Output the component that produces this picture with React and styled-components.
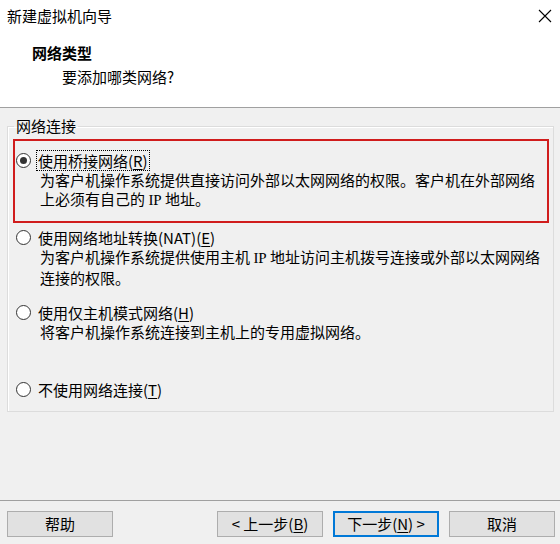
import React from "react";
import styled, { createGlobalStyle } from "styled-components";

const GlobalStyle = createGlobalStyle`
  html, body {
    margin: 0;
    padding: 0;
    background: #f0f0f0;
  }
  body {
    font-family: "Noto Sans CJK SC", "Noto Sans", sans-serif;
    font-size: 15px;
    color: #000;
  }
`;

const Window = styled.div`
  width: 560px;
  height: 544px;
  display: flex;
  flex-direction: column;
  overflow: hidden;
  background: #f0f0f0;
`;

const Header = styled.header`
  height: 108px;
  box-sizing: border-box;
  background: #fff;
  border-bottom: 1px solid #a0a0a0;
`;

const TitleBar = styled.div`
  height: 32px;
  display: flex;
  align-items: center;
  justify-content: space-between;
  padding: 0 8px 0 7px;
  line-height: 20px;
`;

const CloseButton = styled.span`
  display: block;
  width: 14px;
  height: 14px;
  flex: none;

  svg {
    display: block;
  }
`;

const Heading = styled.div`
  margin-top: 11px;
  padding-left: 32px;
  line-height: 20px;
`;

const HeadingTitle = styled.div`
  font-weight: bold;
`;

const HeadingSub = styled.div`
  margin-top: 4px;
  padding-left: 30px;
`;

const Body = styled.main`
  flex: 1;
`;

const Group = styled.fieldset`
  margin: 8px 6px 0 7px;
  padding: 3px 4px 12px 5px;
  border: 1px solid #dcdcdc;
  box-shadow: inset 1px 1px 0 #fff;
  min-width: 0;
`;

const Legend = styled.legend`
  padding: 0 2px;
  margin-left: 1px;
  line-height: 20px;
`;

const Highlight = styled.div`
  border: 2px solid #d01c1c;
  padding: 9.5px 0 11px 1px;
`;

const Option = styled.div`
  padding-left: ${(p) => (p.$framed ? 0 : 3)}px;
  margin-top: ${(p) => p.$top || 0}px;
  line-height: 19px;
`;

const OptionLabel = styled.div`
  display: flex;
  align-items: center;
  gap: 7px;
  height: 19px;
`;

const Radio = styled.span`
  position: relative;
  width: 15px;
  height: 15px;
  box-sizing: border-box;
  border: 1px solid #333;
  border-radius: 50%;
  background: #fff;
  flex: none;

  &::after {
    content: "";
    display: ${(p) => (p.$checked ? "block" : "none")};
    position: absolute;
    left: 3px;
    top: 3px;
    width: 7px;
    height: 7px;
    border-radius: 50%;
    background: #333;
  }
`;

const Focus = styled.span`
  outline: 1px dotted #000;
  padding: 0 1px;
  margin-left: -1px;
`;

const Key = styled.span`
  text-decoration: underline;
  text-underline-offset: 2px;
`;

const Latin = styled.span`
  font-family: "Liberation Serif", serif;
`;

const Desc = styled.div`
  padding-left: 24px;
`;

const Footer = styled.footer`
  height: 44px;
  box-sizing: border-box;
  border-top: 1px solid #a0a0a0;
  padding: 10px 5px 0 7px;
  display: flex;
  gap: 10px;
`;

const Button = styled.button`
  width: 106px;
  height: 26px;
  box-sizing: border-box;
  border: ${(p) => (p.$primary ? "2px solid #0078d7" : "1px solid #adadad")};
  background: #e1e1e1;
  font: inherit;
  line-height: 20px;
  color: #000;
  padding: 0;
  margin-left: ${(p) => (p.$push ? "auto" : "0")};
`;

const CloseIcon = () => (
  <svg width="14" height="14" viewBox="0 0 14 14">
    <path d="M1 1 L13 13 M13 1 L1 13" stroke="#000" strokeWidth="1.1" fill="none" />
  </svg>
);

export default function App() {
  return (
    <>
      <GlobalStyle />
      <Window>
        <Header>
          <TitleBar>
            <span>新建虚拟机向导</span>
            <CloseButton aria-label="关闭">
              <CloseIcon />
            </CloseButton>
          </TitleBar>
          <Heading>
            <HeadingTitle>网络类型</HeadingTitle>
            <HeadingSub>要添加哪类网络?</HeadingSub>
          </Heading>
        </Header>

        <Body>
          <Group>
            <Legend>网络连接</Legend>
            <Highlight>
              <Option $framed>
                <OptionLabel>
                  <Radio $checked />
                  <Focus>
                    使用桥接网络(<Key>R</Key>)
                  </Focus>
                </OptionLabel>
                <Desc>
                  为客户机操作系统提供直接访问外部以太网网络的权限。客户机在外部网络
                  <br />
                  上必须有自己的 <Latin>IP</Latin> 地址。
                </Desc>
              </Option>
            </Highlight>

            <Option $top={5}>
              <OptionLabel>
                <Radio />
                <span>
                  使用网络地址转换(NAT)(<Key>E</Key>)
                </span>
              </OptionLabel>
              <Desc>
                为客户机操作系统提供使用主机 <Latin>IP</Latin> 地址访问主机拨号连接或外部以太网网络
                <br />
                连接的权限。
              </Desc>
            </Option>

            <Option $top={16}>
              <OptionLabel>
                <Radio />
                <span>
                  使用仅主机模式网络(<Key>H</Key>)
                </span>
              </OptionLabel>
              <Desc>将客户机操作系统连接到主机上的专用虚拟网络。</Desc>
            </Option>

            <Option $top={39}>
              <OptionLabel>
                <Radio />
                <span>
                  不使用网络连接(<Key>T</Key>)
                </span>
              </OptionLabel>
            </Option>
          </Group>
        </Body>

        <Footer>
          <Button>帮助</Button>
          <Button $push>
            &lt; 上一步(<Key>B</Key>)
          </Button>
          <Button $primary>
            下一步(<Key>N</Key>) &gt;
          </Button>
          <Button>取消</Button>
        </Footer>
      </Window>
    </>
  );
}
